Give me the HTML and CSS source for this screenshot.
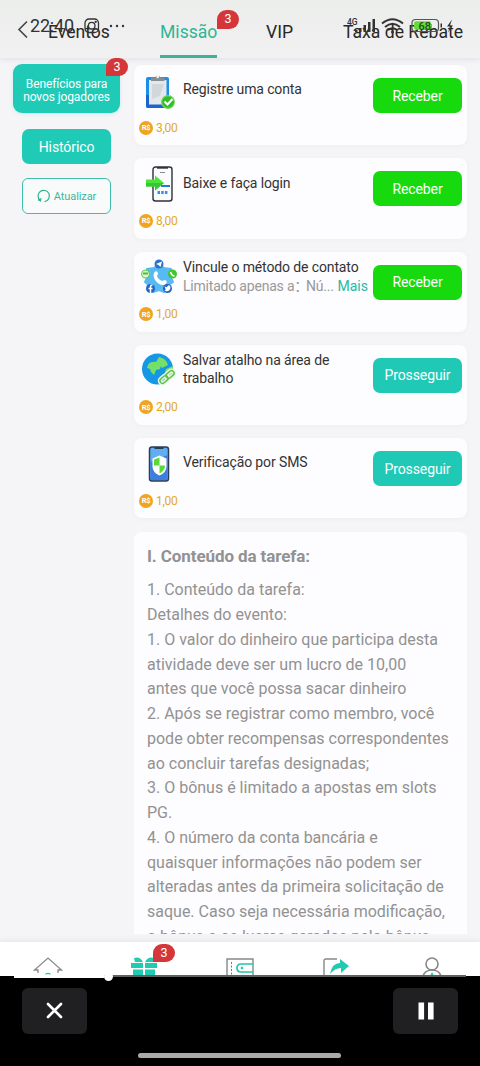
FILE: index.html
```html
<!DOCTYPE html>
<html lang="pt-BR">
<head>
<meta charset="utf-8">
<title>Missão</title>
<link rel="stylesheet" href="styles.css">
</head>
<body>
<div class="screen">
  <header class="tabs">
    <svg class="back" viewBox="0 0 12 18"><path d="M10 1.500 2 9.500 10 17.500" fill="none" stroke="#444" stroke-width="1.6"/></svg>
    <span class="tab tab-events">Eventos</span>
    <span class="tab tab-mission">Missão<b class="badge">3</b></span>
    <span class="tab tab-vip">VIP</span>
    <span class="tab tab-rebate">Taxa de Rebate</span>
    <div class="status">
      <span class="clock">22:40</span>
      <svg class="insta" viewBox="0 0 16 16" fill="none" stroke="#333" stroke-width="1.3"><rect x="1" y="1" width="13.500" height="13.500" rx="4"/><circle cx="7.700" cy="7.700" r="3.300"/><circle cx="11.700" cy="3.900" r=".5"/></svg>
      <svg class="dots" viewBox="0 0 16 4" fill="#333"><circle cx="2" cy="2" r="1.200"/><circle cx="8" cy="2" r="1.200"/><circle cx="14" cy="2" r="1.200"/></svg>
      <svg class="signals" viewBox="0 0 110 20">
        <text x="0" y="8" class="net">4G</text>
        <g fill="#333"><rect x="8" y="13" width="2.500" height="2"/><rect x="12" y="11" width="2.500" height="4"/><rect x="16.500" y="8" width="2.500" height="7"/><rect x="21" y="5" width="2.500" height="10"/><rect x="25.500" y="2" width="2.500" height="13"/></g>
        <g fill="none" stroke="#333" stroke-width="2"><path d="M35 6.500Q45.500-2 56 6.500M38 10Q45.500 3.500 53 10M41 13Q45.500 9.500 50 13"/></g><circle cx="45.500" cy="15" r="1.500" fill="#333"/>
        <rect x="65" y="2.500" width="26.500" height="12" rx="3.500" fill="none" stroke="#555" stroke-width="1.200"/><rect x="67" y="4.200" width="17" height="8.600" rx="2" fill="#66db35"/><rect x="93.500" y="6.500" width="1.500" height="4" fill="#333"/>
        <text x="71.500" y="13" class="charge">68</text><path d="M105 2.500 100 9.500h3l-2 6 5-7h-3z" fill="#333"/>
      </svg>
    </div>
  </header>

  <main class="content">
    <aside class="side">
      <button class="side-btn side-main">Benefícios para<br>novos jogadores<b class="badge">3</b></button>
      <button class="side-btn side-history">Histórico</button>
      <button class="side-btn side-refresh"><svg viewBox="0 0 14 14"><path d="M3.300 11.600A5.700 5.700 0 1 1 7.500 12.700M1 10.800l2.500 1 .5-2.600" fill="none" stroke="#2bb596" stroke-width="1.200"/></svg>Atualizar</button>
    </aside>
    <section class="list">
      <article class="task">
        <div class="row">
          <svg class="art" viewBox="0 0 36 36"><rect x="5" y="4" width="23" height="31" rx="2" fill="#1b8fe8"/><path d="M5 22h23v11q0 2-2 2H7q-2 0-2-2z" fill="#1a65cf"/><path d="M8 7h17.500v24.500H8z" fill="#e4e8ec"/><path d="M11 11h12l-4 12-8 3z" fill="#d3d7da"/><path d="M10 8V4.500h4a3 3 0 0 1 5.500 0h4V8z" fill="#858f91"/><circle cx="16.700" cy="4" r="1.200" fill="#fff"/><circle cx="27" cy="29" r="7" fill="#7bd45c"/><circle cx="27" cy="29" r="5.800" fill="#2cbf28"/><path d="m23.500 28.500 3 3 5-5.500" fill="none" stroke="#fff" stroke-width="2"/></svg>
          <div class="copy"><p>Registre uma conta</p></div><button class="action receive">Receber</button>
        </div>
        <div class="prize"><i>R$</i>3,00</div>
      </article>
      <article class="task">
        <div class="row">
          <svg class="art" viewBox="0 0 36 36"><rect x="12" y="1" width="19" height="34" rx="2.500" fill="#fafbfd" stroke="#303238" stroke-width="1.400"/><path d="M16 1h11v1.700H16z" fill="#303238"/><path d="M19 6.500h5" stroke="#888"/><path d="M20 20h9" stroke="#2478dc" stroke-width="2"/><path d="M16.500 26.500h10" stroke="#3190ee" stroke-width="3" stroke-dasharray="2.500 1.200"/><path d="M5 13.500h9v-4l9 7.500-9 7.500v-4H5z" fill="#4be53a"/><path d="M5 17h18l-9 7.500v-4H5z" fill="#35c835"/></svg>
          <div class="copy"><p>Baixe e faça login</p></div><button class="action receive">Receber</button>
        </div>
        <div class="prize"><i>R$</i>8,00</div>
      </article>
      <article class="task">
        <div class="row">
          <svg class="art" viewBox="0 0 36 36"><path d="m18 5 5 4 7 1-1 7 3 6-6 4-3 6-5-2-6 2-3-6-5-4 3-6-1-7 7-1z" fill="#58baf2" stroke="#58baf2" stroke-width="2" stroke-linejoin="round"/><path d="M13 14c1.500-3 4-2 4 1l-1 2c1 3 3 4 5 5l3-1c3 1 2 4-1 5-6 1-12-7-10-12z" fill="#fff"/><circle cx="18" cy="5" r="4.500" fill="#2c73c7"/><path d="m15 5 6-2.500-1.500 5.500-2-2z" fill="#fff"/><circle cx="4.500" cy="15" r="4" fill="#e0f6cf" stroke="#56ce43"/><path d="M2 14.500h5" stroke="#53b749" stroke-width="2"/><circle cx="31.500" cy="15" r="4.500" fill="#43c62d"/><path d="M29.500 13c1 3 2 4 4 4" fill="none" stroke="#fff" stroke-width="1.500"/><circle cx="9.500" cy="29.500" r="4.500" fill="#2264be"/><path d="M9.500 34v-6q0-2 2-2M7.500 29.500h4" fill="none" stroke="#fff" stroke-width="1.500"/><circle cx="26.500" cy="29.500" r="4.500" fill="#2264be"/><path d="M23.500 27c2 2 3 1 3 0q2-2 3 1c0 5-5 5-6 3q2 0 1-1z" fill="#fff"/></svg>
          <div class="copy contact"><p>Vincule o método de contato</p><div class="hint"><span class="limit">Limitado apenas a<span class="colon">：</span></span><span class="num">Nú...</span><a>Mais</a></div></div><button class="action receive">Receber</button>
        </div>
        <div class="prize"><i>R$</i>1,00</div>
      </article>
      <article class="task">
        <div class="row">
          <svg class="art" viewBox="0 0 36 36"><circle cx="16.500" cy="17" r="15.500" fill="#1597e5"/><path d="M7 13q2-4 9-3l4 3-1 4-4 1-2 5-3-3-1-3-3-1zM18 5q7 1 9 8l-6 3-2-3-4-3zM25 17l7-3v5l-4 7-4-5z" fill="#76df68"/><g fill="none" stroke="#e8f9df" stroke-width="4.500"><rect x="18.500" y="25" width="9" height="5" rx="2.500" transform="rotate(-40 23 27.500)"/><rect x="24.500" y="20" width="9" height="5" rx="2.500" transform="rotate(-40 29 22.500)"/></g><g fill="none" stroke="#65bd4f" stroke-width="1.500"><rect x="18.500" y="25" width="9" height="5" rx="2.500" transform="rotate(-40 23 27.500)"/><rect x="24.500" y="20" width="9" height="5" rx="2.500" transform="rotate(-40 29 22.500)"/></g></svg>
          <div class="copy"><p>Salvar atalho na área de trabalho</p></div><button class="action go">Prosseguir</button>
        </div>
        <div class="prize"><i>R$</i>2,00</div>
      </article>
      <article class="task">
        <div class="row">
          <svg class="art" viewBox="0 0 36 36"><rect x="8.500" y="1" width="19" height="34" rx="2.500" fill="#5faef3" stroke="#2d3b58" stroke-width="1.500"/><path d="M9.500 16 26.500 9v25h-17z" fill="#3f7ddf"/><path d="M13.500 1h9v2h-9z" fill="#2d3b58"/><path d="m18.500 9.500 7 3v8q0 6-7 9-7-3-7-9v-8z" fill="#fff"/><path d="M18.500 11.500 13 13.500v6h5.500zM18.500 19.500H24q0 5-5.500 8z" fill="#59db35"/></svg>
          <div class="copy"><p>Verificação por SMS</p></div><button class="action go">Prosseguir</button>
        </div>
        <div class="prize"><i>R$</i>1,00</div>
      </article>
      <article class="terms">
        <h2>I. Conteúdo da tarefa:</h2>
        <p>1. Conteúdo da tarefa:<br>Detalhes do evento:<br>1. O valor do dinheiro que participa desta<br>atividade deve ser um lucro de 10,00<br>antes que você possa sacar dinheiro<br>2. Após se registrar como membro, você<br>pode obter recompensas correspondentes<br>ao concluir tarefas designadas;<br>3. O bônus é limitado a apostas em slots<br>PG.<br>4. O número da conta bancária e<br>quaisquer informações não podem ser<br>alteradas antes da primeira solicitação de<br>saque. Caso seja necessária modificação,<br>o bônus e os lucros gerados pelo bônus</p>
      </article>
    </section>
  </main>

  <nav class="nav">
    <svg viewBox="0 0 32 20"><path d="M6 17v-3H2.500L16 2l13.500 12H26v3" fill="none" stroke="#888" stroke-width="1.300"/><path d="M13.500 18.200q2.500-1.500 5 0" fill="none" stroke="#20c5ab" stroke-width="1.300"/></svg>
    <div class="gift"><svg viewBox="0 0 32 20"><path d="M3 7h12v5H3zM17 7h12v5H17zM5 13.500h10V20H5zM17 13.500h10V20H17zM6 2q6-2 9 4H7zM17 6q3-6 9-4l-1 4z" fill="#20cbb1"/></svg><b class="badge">3</b></div>
    <svg viewBox="0 0 32 20"><path d="M3 20V3h26v17" fill="none" stroke="#888" stroke-width="1.400"/><path d="M7.500 6v14" stroke="#777" stroke-dasharray="2 1.500"/><path d="M29 8H17q-4 0-4 4t4 4h12" fill="none" stroke="#20c5ab" stroke-width="1.700"/><circle cx="18" cy="12" r="1.300" fill="#20c5ab"/></svg>
    <svg viewBox="0 0 32 20"><path d="M4 20V5q0-2 2-2h11" fill="none" stroke="#888" stroke-width="1.400"/><path d="M10 18Q12 7 20 7V3l9 7-8 7v-5q-6 0-11 6z" fill="#20cbb1"/></svg>
    <svg viewBox="0 0 32 20"><circle cx="16" cy="8" r="6" fill="none" stroke="#888" stroke-width="1.600"/><path d="M7 20q2-6 9-6t9 6" fill="none" stroke="#888" stroke-width="1.600"/><path d="m16 16 2 4h-4z" fill="#20c5ab"/></svg>
  </nav>
  <footer class="player">
    <div class="track"><div class="played"></div><div class="knob"></div></div>
    <div class="controls">
      <button class="control"><svg viewBox="0 0 20 20"><path d="m3 3 13 13M16 3 3 16" stroke="#fff" stroke-width="2.600" stroke-linecap="round"/></svg></button>
      <button class="control"><svg viewBox="0 0 20 20"><path d="M2.500 1.500h5.600v17H2.500zM12 1.500h5.600v17H12z" fill="#fff"/></svg></button>
    </div>
    <div class="gesture"></div>
  </footer>
</div>
</body>
</html>
```
FILE: styles.css
```css
* { box-sizing: border-box; }
body { margin: 0; font-family: Roboto, sans-serif; color: #333; }
button { border: 0; padding: 0; font-family: inherit; }
p, h2 { margin: 0; }
.screen { width: 480px; height: 1066px; display: flex; flex-direction: column; overflow: hidden; background: #f5f5f7; }

.tabs { position: relative; z-index: 2; flex: none; height: 58px; display: flex; align-items: flex-end; background: linear-gradient(#ebedeb, #f1f1f1); box-shadow: 0 1px 6px #dddde2; }
.back { width: 12px; height: 18px; margin: 0 0 20px 17px; }
.tab { height: 39px; line-height: 26px; font-size: 17.600px; white-space: nowrap; color: #282828; }
.tab-events { margin-left: 19px; width: 112px; }
.tab-mission { position: relative; width: 57px; color: #2eb596; border-bottom: 3px solid #3eb39a; }
.tab-vip { margin-left: 49px; width: 77px; }
.badge { position: absolute; display: flex; align-items: center; justify-content: center; width: 22px; height: 18px; background: #d53639; color: #fff; border-radius: 10px 10px 10px 0; font-size: 12.500px; font-weight: 400; line-height: 1; letter-spacing: 0; }
.tab-mission .badge { left: 57px; top: -9px; height: 19px; }

.status { position: absolute; inset: 0; color: #333; }
.clock { position: absolute; left: 30px; top: 14px; font-size: 18px; line-height: 23px; letter-spacing: -.2px; }
.insta { position: absolute; left: 84px; top: 18px; width: 16px; height: 16px; }
.dots { position: absolute; left: 109px; top: 24px; width: 16px; height: 4px; }
.signals { position: absolute; left: 347px; top: 17px; width: 110px; height: 20px; }
.net { font: 500 8.500px Roboto, sans-serif; fill: #333; }
.charge { font: 500 11px Roboto, sans-serif; fill: #244b24; }

.content { flex: none; height: 876px; display: flex; overflow: hidden; }
.side { position: relative; z-index: 3; width: 134px; flex: none; display: flex; flex-direction: column; padding: 6px 14px 0 13px; }
.side-btn { color: #fff; background: #1fcab6; }
.side-main { position: relative; height: 49px; border-radius: 9px; font-size: 12px; letter-spacing: -.1px; line-height: 13.500px; padding-top: 5px; box-shadow: 0 1px 4px #d0e9e7; }
.side-main .badge { right: -8px; top: -6px; }
.side-history { height: 35px; margin: 16px 9px 0; border-radius: 7px; font-size: 14px; letter-spacing: -.1px; }
.side-refresh { display: flex; align-items: center; justify-content: center; gap: 3px; height: 36px; margin: 14px 9px 0; border: 1px solid #40bda9; border-radius: 6px; background: #f9fbfb; color: #3db6a2; font-size: 11px; letter-spacing: -.1px; }
.side-refresh svg { width: 14px; height: 14px; }

.list { width: 333px; padding-top: 7px; display: flex; flex-direction: column; gap: 13px; }
.task { flex: none; height: 80.300px; padding: 6px 5px 0 6px; border-radius: 8px; background: #fdfcfe; box-shadow: 0 1px 4px #eeeef1; }
.row { display: flex; height: 49px; align-items: center; }
.art { width: 36px; height: 36px; flex: none; margin: -10px 6px 0 1px; }
.copy { flex: 1; min-width: 0; margin-top: -12px; font-size: 14px; letter-spacing: -.12px; line-height: 18.500px; color: #333; }
.copy p { width: 178px; white-space: normal; }
.contact p { white-space: nowrap; }
.contact { margin-top: -11px; }
.hint { display: flex; width: 185px; color: #999; font-size: 14px; letter-spacing: -.2px; white-space: nowrap; }
.limit { width: 123px; }
.colon { font-family: "Noto Sans CJK SC", sans-serif; line-height: 1; }
.hint a { margin-left: auto; color: #27b9a3; letter-spacing: 0; }
.action { flex: none; width: 89px; height: 35px; border-radius: 7px; color: #fff; font-size: 14px; letter-spacing: -.1px; }
.receive { background: #16da0d; }
.go { background: #20c9b5; }
.prize { display: flex; align-items: center; gap: 3px; height: 15px; font-size: 12px; color: #e2aa25; letter-spacing: -.3px; }
.prize i { display: flex; align-items: center; justify-content: center; width: 14px; height: 14px; margin-left: -1px; border-radius: 50%; background: #efa51d; color: #fff; font: 700 7.500px Roboto, sans-serif; }
.terms { flex: none; margin-top: 1px; padding: 12px 13px; border-radius: 8px; background: #fdfcfe; color: #929292; }
.terms h2 { font-size: 17px; letter-spacing: -.1px; line-height: 25px; font-weight: 700; }
.terms p { margin-top: 9px; font-size: 16px; line-height: 24.750px; white-space: nowrap; }

.nav { flex: none; height: 34px; margin-top: 8px; display: grid; grid-template-columns: repeat(5, 96px); justify-items: center; padding-top: 14px; background: #fff; box-shadow: 0 -2px 5px #e7e7e9; }
.nav svg { display: block; width: 32px; height: 20px; }
.gift { position: relative; }
.nav .badge { left: 25px; top: -12px; }

.player { position: relative; flex: 1; padding-top: 12px; background: #000; }
.track { position: absolute; left: 14px; top: -1px; display: flex; align-items: center; width: 452px; height: 2px; background: #606060; }
.played { width: 90px; height: 3px; background: #fff; }
.knob { width: 9px; height: 9px; border-radius: 50%; background: #fff; }
.controls { display: flex; justify-content: space-between; padding: 0 22px; }
.control { display: flex; align-items: center; justify-content: center; width: 65px; height: 46px; border-radius: 6px; background: #202023; }
.control svg { width: 20px; height: 20px; }
.gesture { width: 203px; height: 5px; margin: 19px auto 0 138px; border-radius: 3px; background: #aaa; }
```
